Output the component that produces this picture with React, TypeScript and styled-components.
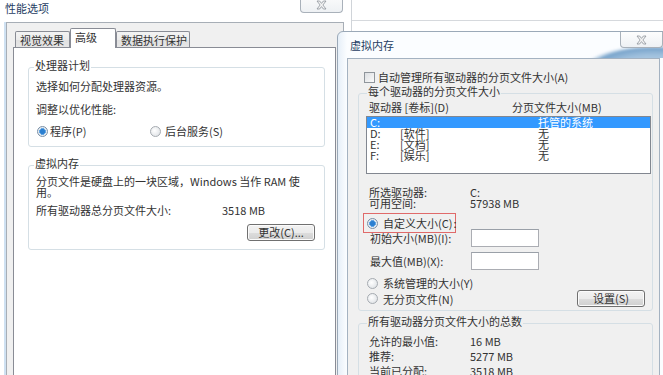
import React from "react";
import styled, { createGlobalStyle } from "styled-components";

const GlobalStyle = createGlobalStyle`
  html, body { margin: 0; padding: 0; background: #fff; }
  body {
    font-family: "Noto Sans CJK SC", "Noto Sans", sans-serif;
    font-size: 11px;
    color: #333;
  }
  *, *::before, *::after { box-sizing: border-box; }
`;

const Desktop = styled.div`
  position: relative;
  width: 663px;
  height: 375px;
  overflow: hidden;
  background: #fff;
`;

/* a window further back, only its frame edges show */
const BackWindow = styled.div`
  position: absolute;
  left: 351px;
  top: 0;
  width: 330px;
  height: 32px;
  border-left: 1px solid #d0d4d9;
`;

const BackTitleEdge = styled.div`
  height: 21px;
  border-bottom: 1px solid #d6d9dd;
`;

/* ---------- shared window parts ---------- */

const WindowTitle = styled.span`
  display: block;
  line-height: 14px;
  font-size: 11px;
  color: #1f3d63;
  text-shadow: 0 0 4px #fff, 0 0 8px #fff;
`;

const CloseButton = styled.div<{ $top: number; $left: number; $h: number; $glyphTop: number }>`
  position: absolute;
  top: ${(p) => p.$top}px;
  left: ${(p) => p.$left}px;
  width: 43px;
  height: ${(p) => p.$h}px;
  border: 1px solid #a9b1ba;
  border-top: none;
  border-radius: 0 0 4px 4px;
  background: linear-gradient(#fdfdfd, #eef1f4);
  display: flex;
  align-items: flex-start;
  justify-content: center;
  padding-top: ${(p) => p.$glyphTop}px;
`;

const CloseGlyph = () => (
  <svg width="11" height="10" viewBox="0 0 11 10">
    <path
      d="M1 1 H3.6 L5.5 3.4 L7.4 1 H10 L6.9 5 L10 9 H7.4 L5.5 6.6 L3.6 9 H1 L4.1 5 Z"
      fill="#f4f4f4"
      stroke="#8d939a"
      strokeWidth="0.8"
    />
  </svg>
);

/* aero glass: a blue dome from the desktop behind shows under the close button */
const DomeLayer = styled.svg`
  position: absolute;
  left: 244px;
  top: 12px;
  width: 88px;
  height: 14px;
  overflow: hidden;
`;

const GlassDome = () => (
  <DomeLayer viewBox="0 0 88 14">
    <defs>
      <radialGradient id="domeFill" cx="0.5" cy="0.5" r="0.5">
        <stop offset="0" stopColor="#c2d7ea" />
        <stop offset="0.6" stopColor="#9fc0dd" />
        <stop offset="0.86" stopColor="#7aa5cc" />
        <stop offset="1" stopColor="#a9c6e0" stopOpacity="0" />
      </radialGradient>
      <filter id="domeSoft" x="-10%" y="-10%" width="120%" height="120%">
        <feGaussianBlur stdDeviation="0.8" />
      </filter>
    </defs>
    <ellipse cx="72" cy="26" rx="72" ry="25" fill="url(#domeFill)" filter="url(#domeSoft)" />
  </DomeLayer>
);

const Group = styled.div<{ $pad: string; $mt: number; $bg: string }>`
  margin-top: ${(p) => p.$mt}px;
  border: 1px solid #d5dfe5;
  border-radius: 3px;
  padding: ${(p) => p.$pad};
  background: ${(p) => p.$bg};
  display: flex;
  flex-direction: column;
`;

const Legend = styled.div`
  align-self: flex-start;
  margin: -10px 0 0 -2px;
  padding: 0 1px;
  line-height: 14px;
  background: inherit;
  white-space: nowrap;
`;

const Line = styled.div<{ $mt?: number; $lh?: number }>`
  margin-top: ${(p) => p.$mt ?? 0}px;
  line-height: ${(p) => p.$lh ?? 14}px;
  white-space: nowrap;
`;

const RadioRow = styled.div<{ $mt?: number; $h?: number }>`
  margin-top: ${(p) => p.$mt ?? 0}px;
  height: ${(p) => p.$h ?? 14}px;
  display: flex;
  align-items: center;
  white-space: nowrap;
`;

const RadioItem = styled.span<{ $w?: number; $gap: number; $ml?: number; $mark?: boolean }>`
  display: inline-flex;
  align-items: center;
  gap: ${(p) => p.$gap}px;
  margin-left: ${(p) => p.$ml ?? 0}px;
  width: ${(p) => (p.$w ? `${p.$w}px` : "auto")};
  line-height: 14px;
  padding: ${(p) => (p.$mark ? "0 1px" : "0")};
  outline: ${(p) => (p.$mark ? "1px solid #e06a6a" : "none")};
  outline-offset: 2px;
`;

const RadioDot = styled.span<{ $on?: boolean }>`
  flex: none;
  width: 11px;
  height: 11px;
  border-radius: 50%;
  border: 1px solid ${(p) => (p.$on ? "#7a8fa6" : "#a6abb1")};
  background: ${(p) =>
    p.$on
      ? "radial-gradient(circle, #2b7fd0 0 2.2px, #66a7e4 2.6px 3.2px, #e6edf3 3.6px)"
      : "radial-gradient(circle at 40% 40%, #ffffff 0, #e4e7ea 70%, #d6dade 100%)"};
`;

const CheckBox = styled.span`
  flex: none;
  width: 11px;
  height: 11px;
  border: 1px solid #8f959b;
  background: linear-gradient(135deg, #dcdfe2, #fafafa);
`;

const PushButton = styled.button<{ $w: number }>`
  width: ${(p) => p.$w}px;
  height: 17px;
  padding: 0;
  font: inherit;
  font-size: 11px;
  line-height: 15px;
  color: #333;
  border: 1px solid #707070;
  border-radius: 3px;
  background: linear-gradient(#f2f2f2 0%, #ebebeb 50%, #dddddd 51%, #cfcfcf 100%);
  box-shadow: inset 0 0 0 1px #fbfbfb;
  white-space: nowrap;
`;

/* ---------- 性能选项 (left window) ---------- */

const PerfWindow = styled.div`
  position: absolute;
  left: 0;
  top: 0;
  width: 344px;
  height: 400px;
  display: flex;
  flex-direction: column;
`;

const PerfTitleBar = styled.div`
  position: relative;
  flex: none;
  height: 22px;
  padding: 1px 0 0 5px;
`;

const PerfBody = styled.div`
  flex: 1;
  display: flex;
  flex-direction: column;
  margin-left: 4px;
  border-left: 2px solid #cfe1f2;
`;

const PerfClient = styled.div`
  flex: 1;
  display: flex;
  flex-direction: column;
  border: 1px solid #a7aeb6;
  border-bottom: none;
  background: #f0f0f0;
  padding: 5px 7px 0 6px;
`;

const TabRow = styled.div`
  position: relative;
  z-index: 1;
  flex: none;
  height: 19px;
  display: flex;
  align-items: flex-end;
  padding-left: 2px;
`;

const Tab = styled.div<{ $w: number; $active?: boolean }>`
  width: ${(p) => p.$w}px;
  height: ${(p) => (p.$active ? 20 : 16)}px;
  margin-bottom: ${(p) => (p.$active ? -1 : 0)}px;
  border: 1px solid #898c95;
  border-bottom: none;
  border-radius: 2px 2px 0 0;
  padding: 0 0 ${(p) => (p.$active ? 3 : 0)}px 4px;
  display: flex;
  align-items: center;
  line-height: 14px;
  white-space: nowrap;
  background: ${(p) =>
    p.$active ? "#fff" : "linear-gradient(#f3f3f3, #ececec 50%, #e0e0e0 51%, #e6e6e6)"};
`;

const TabPanel = styled.div`
  flex: 1;
  display: flex;
  flex-direction: column;
  background: #fff;
  border: 1px solid #898c95;
  border-bottom: none;
  padding: 19px 10px 0 14px;
`;

const ValueRow = styled.div<{ $mt?: number; $lh?: number; $label: number }>`
  margin-top: ${(p) => p.$mt ?? 0}px;
  display: grid;
  grid-template-columns: ${(p) => p.$label}px 1fr;
  line-height: ${(p) => p.$lh ?? 14}px;
  white-space: nowrap;
`;

const ButtonEnd = styled.div<{ $mt: number; $mr: number }>`
  margin-top: ${(p) => p.$mt}px;
  margin-right: ${(p) => p.$mr}px;
  align-self: flex-end;
  display: flex;
`;

/* ---------- 虚拟内存 (right dialog) ---------- */

const VmWindow = styled.div`
  position: absolute;
  left: 337px;
  top: 31px;
  width: 334px;
  height: 360px;
  border: 1px solid #9ba9b8;
  border-radius: 6px 6px 0 0;
  background: linear-gradient(to right, #e6eff8 0px, #fbfdff 9px);
  display: flex;
  flex-direction: column;
`;

const VmTitleBar = styled.div`
  position: relative;
  flex: none;
  height: 26px;
  padding: 6px 0 0 12px;
`;

const VmClient = styled.div`
  flex: 1;
  margin: 0 10px 0 9px;
  border: 1px solid #a4b2c1;
  border-bottom: none;
  background: #f0f0f0;
  padding: 11px 6px 0 10px;
  display: flex;
  flex-direction: column;
`;

const CheckRow = styled.div`
  height: 14px;
  margin-left: 6px;
  display: flex;
  align-items: center;
  gap: 3px;
  line-height: 14px;
  white-space: nowrap;
`;

const HeaderRow = styled.div`
  margin-top: 2px;
  display: grid;
  grid-template-columns: 143px 1fr;
  line-height: 14px;
  white-space: nowrap;
`;

const ListBox = styled.div`
  margin: 2px 0 0 -3px;
  align-self: flex-start;
  width: 285px;
  height: 58px;
  border: 1px solid #828790;
  background: #fff;
`;

const ListRow = styled.div<{ $sel?: boolean }>`
  height: 11px;
  line-height: 11px;
  padding-left: 3px;
  display: grid;
  grid-template-columns: 30px 138px 1fr;
  white-space: nowrap;
  background: ${(p) => (p.$sel ? "#3399ff" : "transparent")};
  color: ${(p) => (p.$sel ? "#fff" : "#333")};
`;

const FieldRow = styled.div<{ $mt: number }>`
  margin: ${(p) => p.$mt}px 0 0 1px;
  height: 18px;
  display: grid;
  grid-template-columns: 101px 68px;
  align-items: center;
  white-space: nowrap;
`;

const TextField = styled.div`
  height: 18px;
  border: 1px solid #abadb3;
  border-top-color: #9aa0a8;
  background: #fff;
`;

const SplitRow = styled.div`
  height: 17px;
  display: flex;
  align-items: center;
  justify-content: space-between;
  white-space: nowrap;
`;

const drives = [
  { d: "C:", label: "", size: "托管的系统", sel: true },
  { d: "D:", label: "[软件]", size: "无" },
  { d: "E:", label: "[文档]", size: "无" },
  { d: "F:", label: "[娱乐]", size: "无" },
];

export default function App() {
  return (
    <Desktop>
      <GlobalStyle />
      <BackWindow>
        <BackTitleEdge />
      </BackWindow>

      <PerfWindow>
        <PerfTitleBar>
          <WindowTitle>性能选项</WindowTitle>
          <CloseButton $top={-6} $left={300} $h={19} $glyphTop={6}>
            <CloseGlyph />
          </CloseButton>
        </PerfTitleBar>
        <PerfBody>
          <PerfClient>
            <TabRow>
              <Tab $w={55}>视觉效果</Tab>
              <Tab $w={46} $active>
                高级
              </Tab>
              <Tab $w={74}>数据执行保护</Tab>
            </TabRow>
            <TabPanel>
              <Group $mt={0} $pad="0 8px 8px 7px" $bg="#fff">
                <Legend>处理器计划</Legend>
                <Line $mt={7}>选择如何分配处理器资源。</Line>
                <Line $mt={9}>调整以优化性能:</Line>
                <RadioRow $mt={8}>
                  <RadioItem $w={112} $gap={2} $ml={1}>
                    <RadioDot $on />
                    程序(P)
                  </RadioItem>
                  <RadioItem $gap={4} $ml={1}>
                    <RadioDot />
                    后台服务(S)
                  </RadioItem>
                </RadioRow>
              </Group>

              <Group $mt={18} $pad="0 8px 8px 7px" $bg="#fff">
                <Legend>虚拟内存</Legend>
                <Line $mt={6} $lh={11}>
                  分页文件是硬盘上的一块区域，Windows 当作 RAM 使<br />用。
                </Line>
                <ValueRow $mt={5} $label={186}>
                  <span>所有驱动器总分页文件大小:</span>
                  <span>3518 MB</span>
                </ValueRow>
                <ButtonEnd $mt={7} $mr={1}>
                  <PushButton $w={68}>更改(C)...</PushButton>
                </ButtonEnd>
              </Group>
            </TabPanel>
          </PerfClient>
        </PerfBody>
      </PerfWindow>

      <VmWindow>
        <VmTitleBar>
          <GlassDome />
          <WindowTitle>虚拟内存</WindowTitle>
          <CloseButton $top={0} $left={282} $h={16} $glyphTop={3}>
            <CloseGlyph />
          </CloseButton>
        </VmTitleBar>
        <VmClient>
          <CheckRow>
            <CheckBox />
            自动管理所有驱动器的分页文件大小(A)
          </CheckRow>

          <Group $mt={9} $pad="0 7px 3px 10px" $bg="#f0f0f0">
            <Legend>每个驱动器的分页文件大小</Legend>
            <HeaderRow>
              <span>驱动器 [卷标](D)</span>
              <span>分页文件大小(MB)</span>
            </HeaderRow>
            <ListBox>
              {drives.map((r) => (
                <ListRow key={r.d} $sel={r.sel}>
                  <span>{r.d}</span>
                  <span>{r.label}</span>
                  <span>{r.size}</span>
                </ListRow>
              ))}
            </ListBox>

            <ValueRow $mt={13} $lh={11} $label={101}>
              <span>所选驱动器:</span>
              <span>C:</span>
              <span>可用空间:</span>
              <span>57938 MB</span>
            </ValueRow>

            <RadioRow $mt={7}>
              <RadioItem $gap={5} $ml={-3} $mark>
                <RadioDot $on />
                自定义大小(C)
              </RadioItem>
              <span>:</span>
            </RadioRow>

            <FieldRow $mt={-1}>
              <span>初始大小(MB)(I):</span>
              <TextField />
            </FieldRow>
            <FieldRow $mt={5}>
              <span>最大值(MB)(X):</span>
              <TextField />
            </FieldRow>

            <RadioRow $mt={6}>
              <RadioItem $gap={5} $ml={-2}>
                <RadioDot />
                系统管理的大小(Y)
              </RadioItem>
            </RadioRow>
            <SplitRow>
              <RadioItem $gap={5} $ml={-2}>
                <RadioDot />
                无分页文件(N)
              </RadioItem>
              <PushButton $w={68}>设置(S)</PushButton>
            </SplitRow>
          </Group>

          <Group $mt={12} $pad="0 7px 10px 10px" $bg="#f0f0f0">
            <Legend>所有驱动器分页文件大小的总数</Legend>
            <ValueRow $mt={6} $lh={15} $label={101}>
              <span>允许的最小值:</span>
              <span>16 MB</span>
              <span>推荐:</span>
              <span>5277 MB</span>
              <span>当前已分配:</span>
              <span>3518 MB</span>
            </ValueRow>
          </Group>
        </VmClient>
      </VmWindow>
    </Desktop>
  );
}
